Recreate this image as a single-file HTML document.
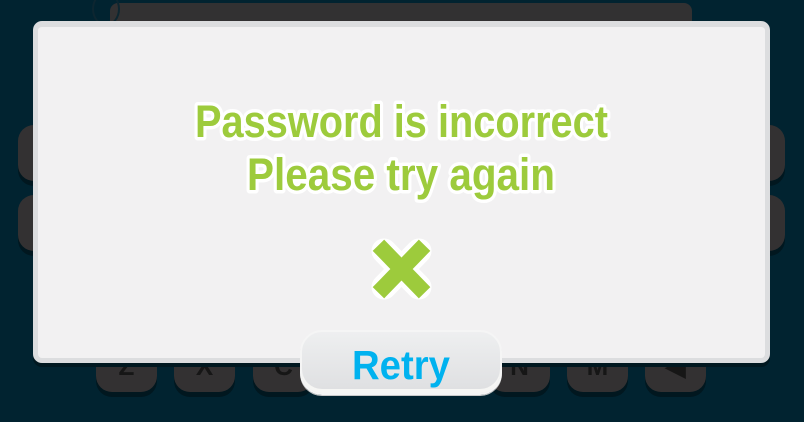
<!DOCTYPE html>
<html><head><style>
html,body{margin:0;padding:0;}
body{width:804px;height:422px;background:#012330;position:relative;overflow:hidden;font-family:"Liberation Sans",sans-serif;}
.key{position:absolute;background:#333132;border-radius:16px;box-shadow:0 5px 0 #01171f;color:#161616;font-weight:bold;font-size:26px;text-align:center;}
.dlg{position:absolute;left:33px;top:21px;width:737px;height:342px;background:#f2f1f2;border-radius:9px;box-sizing:border-box;border:5px solid #dcdddf;border-top-width:6px;box-shadow:0 4px 0 #011820;}
.btn{position:absolute;left:300px;top:330px;width:202px;height:65px;box-sizing:border-box;border-radius:22px;background:linear-gradient(#eeeff0,#dedfe1);border:2px solid #f5f5f5;box-shadow:inset 0 -4px 0 #f6f6f4,0 1px 0 #c9c9c9;}
</style></head><body>
<div style="position:absolute;left:110px;top:3px;width:582px;height:30px;background:#323132;border-radius:8px;"></div>
<div style="position:absolute;left:92px;top:-8px;width:24px;height:30px;border:2px solid #0d2630;border-radius:50%;"></div>
<div class="key" style="left:18px;top:125px;width:40px;height:56px"></div>
<div class="key" style="left:18px;top:195px;width:40px;height:56px"></div>
<div class="key" style="left:745px;top:125px;width:40px;height:56px"></div>
<div class="key" style="left:745px;top:195px;width:40px;height:56px"></div>
<div class="key" style="left:96px;top:340px;width:61px;height:52px;line-height:52px">Z</div>
<div class="key" style="left:174px;top:340px;width:61px;height:52px;line-height:52px">X</div>
<div class="key" style="left:253px;top:340px;width:61px;height:52px;line-height:52px">C</div>
<div class="key" style="left:489px;top:340px;width:61px;height:52px;line-height:52px">N</div>
<div class="key" style="left:567px;top:340px;width:61px;height:52px;line-height:52px">M</div>
<div class="key" style="left:645px;top:340px;width:61px;height:52px;line-height:52px">◀</div>
<div class="dlg"></div>
<svg width="804" height="422" style="position:absolute;left:0;top:0">
<g font-family="Liberation Sans, sans-serif" font-weight="bold" font-size="45" fill="#9dcb3c" stroke="#ffffff" stroke-width="7" stroke-linejoin="round" style="paint-order:stroke">
<text x="195" y="137" textLength="413" lengthAdjust="spacingAndGlyphs">Password is incorrect</text>
<text x="247" y="190" textLength="308" lengthAdjust="spacingAndGlyphs">Please try again</text>
</g>
<g stroke-linecap="round">
<path d="M384 251 L419 287 M419 251 L384 287" stroke="#ffffff" stroke-width="25"/>
<path d="M384 251 L419 287 M419 251 L384 287" stroke="#9dcb3c" stroke-width="16" stroke-linecap="square"/>
</g>
</svg>
<div class="btn"></div>
<svg width="804" height="422" style="position:absolute;left:0;top:0">
<text x="352" y="379" font-family="Liberation Sans, sans-serif" font-weight="bold" font-size="41" fill="#00b2ef" textLength="98" lengthAdjust="spacingAndGlyphs">Retry</text>
</svg>
</body></html>
